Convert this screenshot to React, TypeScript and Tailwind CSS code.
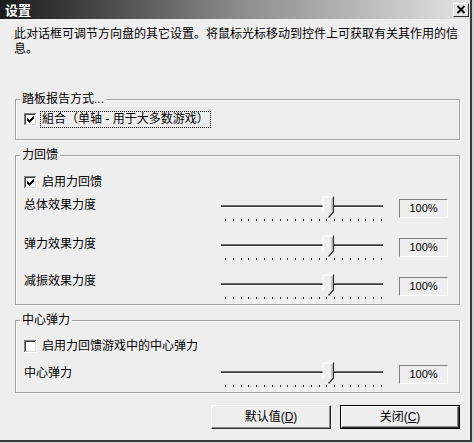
import React from 'react';

const Check = ({ checked }: { checked: boolean }) => {
    // classic 7x7 check mark, one column of 3 px per x
    const cols = [2, 3, 4, 3, 2, 1, 0];
    return (
        <svg width="13" height="13" viewBox="0 0 13 13" className="shrink-0 block">
            <rect x="0" y="0" width="13" height="13" fill="#ffffff" />
            <rect x="0" y="0" width="12" height="1" fill="#808080" />
            <rect x="0" y="0" width="1" height="12" fill="#808080" />
            <rect x="1" y="1" width="10" height="1" fill="#404040" />
            <rect x="1" y="1" width="1" height="10" fill="#404040" />
            <rect x="1" y="11" width="11" height="1" fill="#d6d6d6" />
            <rect x="11" y="1" width="1" height="11" fill="#d6d6d6" />
            <rect x="0" y="12" width="13" height="1" fill="#ffffff" />
            <rect x="12" y="0" width="1" height="13" fill="#ffffff" />
            {checked && cols.map((top, i) => (
                <rect key={i} x={3 + i} y={3 + top} width="1" height="3" fill="#000000" />
            ))}
        </svg>
    );
};

const Slider = () => {
    const ticks = Array.from({ length: 21 }, (_, i) => 7 + i * 7.8);
    return (
        <svg width="168" height="26" viewBox="0 0 168 26" className="shrink-0 block">
            <rect x="3" y="9" width="162" height="1" fill="#6a6a6a" />
            <rect x="3" y="10" width="162" height="1" fill="#3a3a3a" />
            <rect x="3" y="11" width="162" height="1" fill="#ffffff" />
            {ticks.map((x, i) => (
                <rect key={i} x={Math.round(x)} y="23" width="1" height="2" fill="#3a3a3a" />
            ))}
            {/* thumb */}
            <polygon points="105,1 115,1 115,16 110,21 105,16" fill="#eeeeee" />
            <polyline points="105,16 105,1 115,1" fill="none" stroke="#ffffff" strokeWidth="1" />
            <polyline points="115.5,0.5 115.5,16 110.5,21.5" fill="none" stroke="#2e2e2e" strokeWidth="1.2" />
            <polyline points="114,2 114,15.5" fill="none" stroke="#9a9a9a" strokeWidth="1" />
        </svg>
    );
};

const SliderRow = ({ label, offset }: { label: string; offset: string }) => (
    <div className="flex items-start h-[26px]">
        <span className={`w-[194px] leading-[15px] ${offset}`}>{label}</span>
        <Slider />
        <div className="ml-[13px] mt-[3px] w-[49px] h-[19px] flex items-center justify-center border border-t-[#808080] border-l-[#808080] border-b-white border-r-white text-[11px] [font-family:'Liberation_Sans',sans-serif]">
            100%
        </div>
    </div>
);

const Legend = ({ children }: { children: React.ReactNode }) => (
    <legend className="-ml-[4px] px-[2px] leading-[14px] bg-[#eeeeee]">{children}</legend>
);

export default function App() {
    return (
        <div className="w-[474px] h-[443px] bg-[#cfcfcf] pr-[2px] pb-[1px] [font-family:'Liberation_Sans','Noto_Sans_CJK_SC',sans-serif] text-[12px] text-black">
            <div className="w-full h-full flex flex-col bg-[#eeeeee] border-r-2 border-b-2 border-[#3a3a3a]">
                {/* title bar */}
                <div className="h-[19px] shrink-0 flex items-center justify-between bg-gradient-to-r from-[#1c1c1c] via-[#8a8a8a] to-[#e4e4e4] pl-[5px] pr-px">
                    <span className="text-white font-bold text-[13px] leading-[19px] [font-family:'Noto_Sans_CJK_SC',sans-serif]">设置</span>
                    <div className="w-[16px] h-[14px] bg-[#e2e2e2] border border-t-white border-l-white border-b-[#303030] border-r-[#303030] flex items-center justify-center">
                        <svg width="10" height="9" viewBox="0 0 10 9">
                            <path d="M1.5 1 L8.5 8 M8.5 1 L1.5 8" stroke="#000" strokeWidth="1.8" />
                        </svg>
                    </div>
                </div>

                <div className="flex flex-col pl-[15px] pr-[10px]">
                    <p className="pt-[8px] leading-[15px] -ml-px whitespace-nowrap">
                        此对话框可调节方向盘的其它设置。将鼠标光标移动到控件上可获取有关其作用的信<br />息。
                    </p>

                    <fieldset className="mt-[35px] border border-[#a0a0a0] shadow-[1px_1px_0_#ffffff,inset_1px_1px_0_#ffffff] pl-[8px] pr-[11px] pt-[5px] pb-[11px]">
                        <Legend>踏板报告方式...</Legend>
                        <div className="flex items-center h-[17px]">
                            <Check checked />
                            <span className="ml-[3px] px-[1px] h-[17px] leading-[15px] border border-dotted border-black">
                                組合（单轴 - 用于大多数游戏）
                            </span>
                        </div>
                    </fieldset>

                    <fieldset className="mt-[8px] border border-[#a0a0a0] shadow-[1px_1px_0_#ffffff,inset_1px_1px_0_#ffffff] pl-[8px] pr-[11px] pt-[12px] pb-[4px]">
                        <Legend>力回馈</Legend>
                        <div className="flex items-center h-[17px]">
                            <Check checked />
                            <span className="ml-[5px] leading-[15px]">启用力回馈</span>
                        </div>
                        <div className="flex flex-col gap-[13px] mt-[5px]">
                            <SliderRow label="总体效果力度" offset="mt-[2px]" />
                            <SliderRow label="弹力效果力度" offset="mt-[2px]" />
                            <SliderRow label="减振效果力度" offset="mt-[0px]" />
                        </div>
                    </fieldset>

                    <fieldset className="mt-[8px] border border-[#a0a0a0] shadow-[1px_1px_0_#ffffff,inset_1px_1px_0_#ffffff] pl-[8px] pr-[11px] pt-[11px] pb-[4px]">
                        <Legend>中心弹力</Legend>
                        <div className="flex items-center h-[17px]">
                            <Check checked={false} />
                            <span className="ml-[5px] leading-[15px]">启用力回馈游戏中的中心弹力</span>
                        </div>
                        <div className="mt-[7px]">
                            <SliderRow label="中心弹力" offset="mt-[4px]" />
                        </div>
                    </fieldset>

                    <div className="flex justify-end gap-[9px] mt-[12px]">
                        <button className="w-[120px] h-[24px] bg-[#eeeeee] border border-t-white border-l-white border-b-[#303030] border-r-[#303030] shadow-[inset_-1px_-1px_0_#8a8a8a] leading-[15px]">
                            默认值(<span className="underline">D</span>)
                        </button>
                        <div className="w-[120px] h-[24px] border border-black flex">
                            <button className="flex-1 bg-[#eeeeee] border border-t-white border-l-white border-b-[#303030] border-r-[#303030] shadow-[inset_-1px_-1px_0_#8a8a8a] leading-[15px]">
                                关闭(<span className="underline">C</span>)
                            </button>
                        </div>
                    </div>
                </div>
            </div>
        </div>
    );
}
